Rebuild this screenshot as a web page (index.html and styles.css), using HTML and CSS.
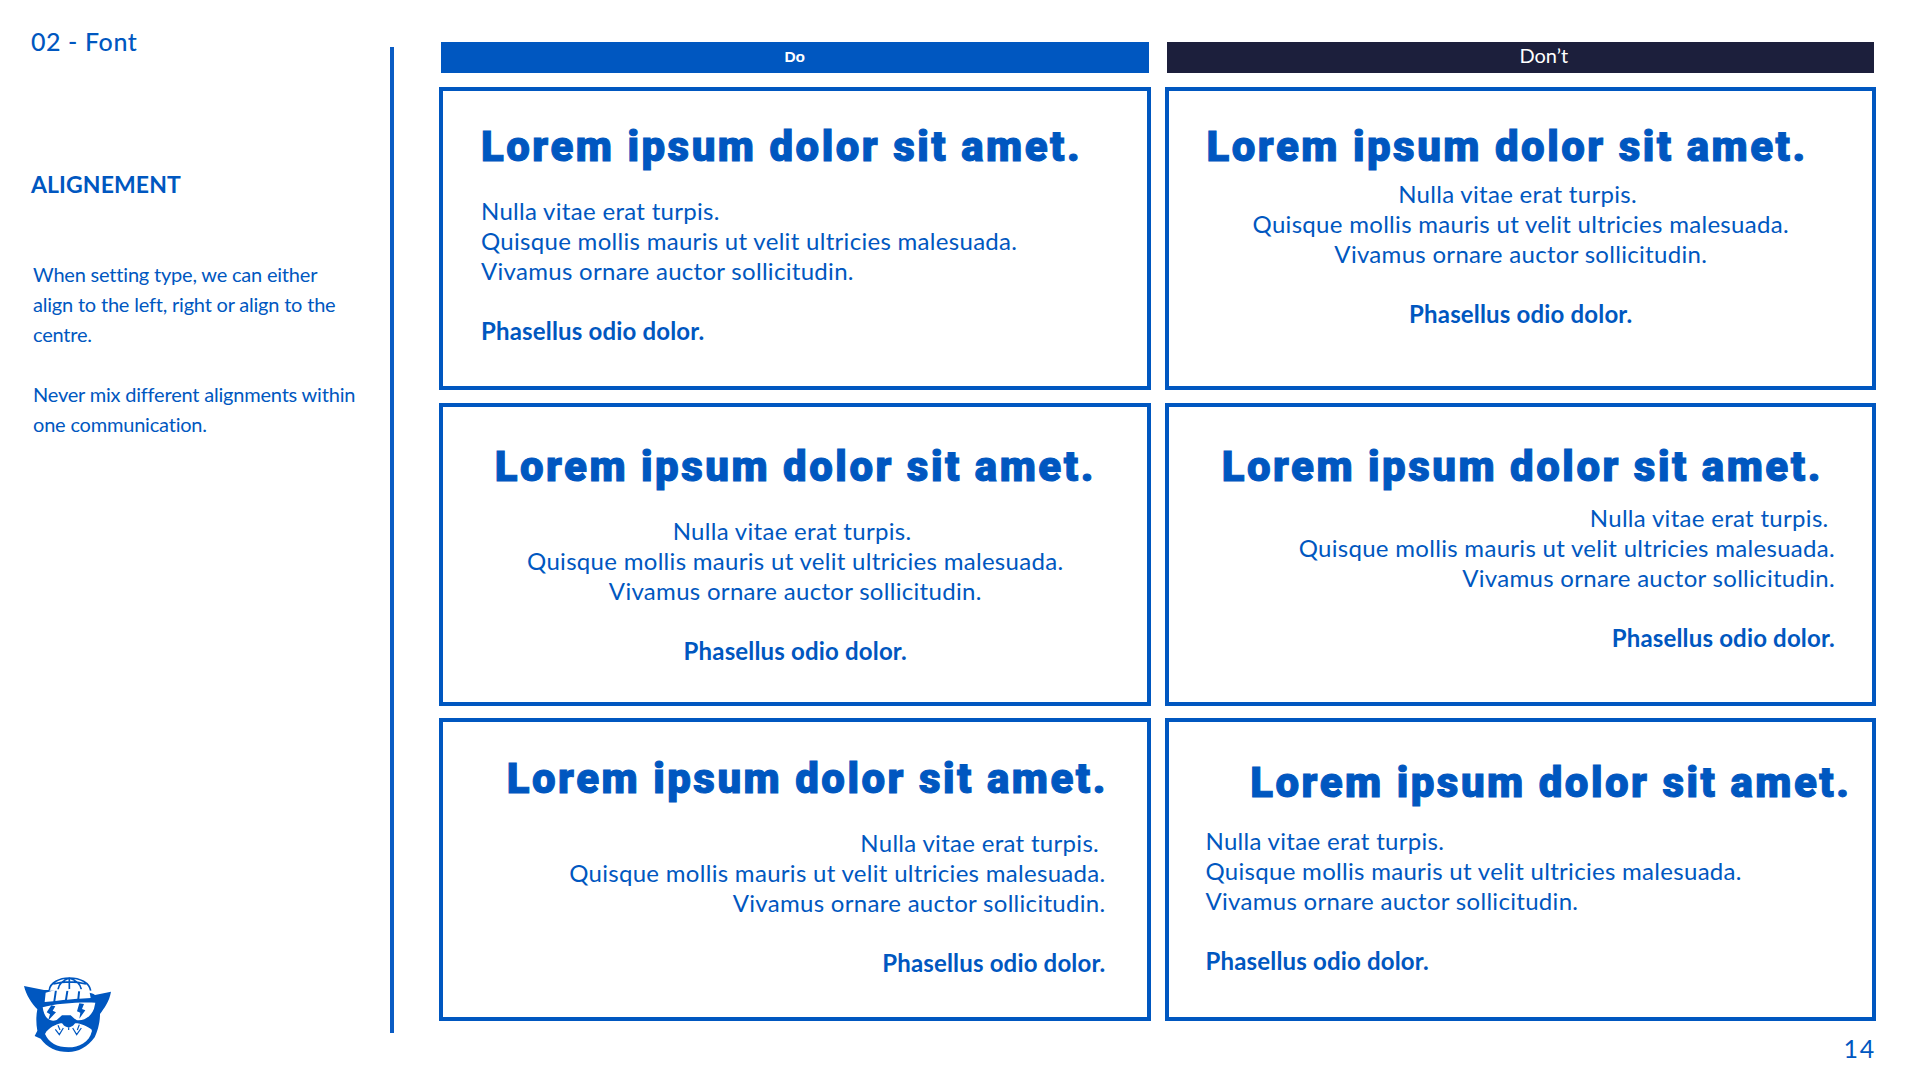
FILE: index.html
```html
<!DOCTYPE html>
<html lang="en">
<head>
<meta charset="utf-8">
<title>02 - Font</title>
<link rel="stylesheet" href="styles.css">
</head>
<body>
<div class="slide">
  <aside class="side">
    <div class="crumb">02 - Font</div>
    <h2 class="side-title">ALIGNEMENT</h2>
    <p class="side-text">When setting type, we can either<br>align to the left, right or align to the<br>centre.</p>
    <p class="side-text">Never mix different alignments within<br>one communication.</p>
    <svg class="logo" viewBox="0 0 420 420" width="140" height="140" aria-label="Logo">
      <path class="b" d="M72 138 L132 150 C150 150 270 150 285 165 L333 155 C328 185 312 205 300 222 C300 250 292 275 284 292 C262 322 235 336 205 336 C170 336 140 322 122 296 L104 288 L112 272 C108 250 108 228 112 208 C95 190 78 165 72 138 Z"/>
      <path class="w" d="M148 150 C150 128 178 114 208 114 C240 114 268 128 272 152 L150 152 Z"/>
      <path class="l" d="M148 150 C150 128 178 114 208 114 C240 114 268 128 272 152 M208 114 L208 148 M208 114 C185 122 176 135 174 148 M208 114 C232 122 242 135 244 148 M160 132 C190 124 228 124 258 132"/>
      <path class="w" d="M137 158 L165 150 L160 184 L134 186 Z M171 149 L200 147 L195 179 L166 183 Z M206 147 L235 147 L232 176 L201 179 Z M241 148 L268 153 L272 174 L238 176 Z"/>
      <path class="w" d="M128 202 C165 190 240 186 286 188 L282 206 C272 232 250 244 228 240 L212 226 L186 226 L170 240 C148 248 132 232 128 202 Z"/>
      <path class="b" d="M154 196 L166 199 L158 212 L168 217 L144 242 L150 223 L140 217 Z M238 190 L252 192 L246 207 L256 211 L238 236 L241 218 L231 214 Z"/>
      <path class="w" d="M135 282 C145 262 168 254 182 250 L232 250 C250 254 270 262 276 272 C268 308 236 322 205 322 C172 322 146 308 135 282 Z"/>
      <path class="b" d="M182 240 C194 234 218 234 230 240 C226 254 214 262 206 262 C196 262 186 254 182 240 Z"/>
      <path class="l2" d="M206 262 L206 270 M166 268 L178 284 L190 264 M218 264 L230 284 L244 264 M174 256 L180 270 M238 254 L232 270"/>
    </svg>
  </aside>
  <div class="rule"></div>
  <main class="main">
    <div class="heads">
      <div class="bar bar-do">Do</div>
      <div class="bar bar-dont"><span class="dont-label">Don’t</span></div>
    </div>
    <div class="cards">
      <section class="card left r1a">
        <h3>Lorem ipsum dolor sit amet.</h3>
        <p class="copy gap-lg">Nulla vitae erat turpis.<br>Quisque mollis mauris ut velit ultricies malesuada.<br>Vivamus ornare auctor sollicitudin.</p>
        <p class="strong">Phasellus odio dolor.</p>
      </section>
      <section class="card center r1b">
        <h3 class="title-left">Lorem ipsum dolor sit amet.</h3>
        <p class="copy gap-sm">Nulla vitae erat turpis.&nbsp;<br>Quisque mollis mauris ut velit ultricies malesuada.<br>Vivamus ornare auctor sollicitudin.</p>
        <p class="strong">Phasellus odio dolor.</p>
      </section>
      <section class="card center r2a">
        <h3>Lorem ipsum dolor sit amet.</h3>
        <p class="copy gap-xl">Nulla vitae erat turpis.&nbsp;<br>Quisque mollis mauris ut velit ultricies malesuada.<br>Vivamus ornare auctor sollicitudin.</p>
        <p class="strong">Phasellus odio dolor.</p>
      </section>
      <section class="card right r2b">
        <h3 class="title-center">Lorem ipsum dolor sit amet.</h3>
        <p class="copy gap-md">Nulla vitae erat turpis.&nbsp;<br>Quisque mollis mauris ut velit ultricies malesuada.<br>Vivamus ornare auctor sollicitudin.</p>
        <p class="strong">Phasellus odio dolor.</p>
      </section>
      <section class="card right r3a">
        <h3>Lorem ipsum dolor sit amet.</h3>
        <p class="copy gap-lg">Nulla vitae erat turpis.&nbsp;<br>Quisque mollis mauris ut velit ultricies malesuada.<br>Vivamus ornare auctor sollicitudin.</p>
        <p class="strong">Phasellus odio dolor.</p>
      </section>
      <section class="card left r3b">
        <h3 class="title-out">Lorem ipsum dolor sit amet.</h3>
        <p class="copy gap-md2">Nulla vitae erat turpis.<br>Quisque mollis mauris ut velit ultricies malesuada.<br>Vivamus ornare auctor sollicitudin.</p>
        <p class="strong">Phasellus odio dolor.</p>
      </section>
    </div>
    <div class="page">14</div>
  </main>
</div>
</body>
</html>
```
FILE: styles.css
```css
* { box-sizing: border-box; }
html, body { margin: 0; padding: 0; background: #fff; }
body { font-family: "Lato", "Noto Sans", sans-serif; color: #0057c0; }
.slide { width: 1920px; height: 1080px; display: flex; overflow: hidden; }

.side { width: 390px; padding: 25px 0 0 31px; display: flex; flex-direction: column; }
.crumb { font-size: 25px; line-height: 32px; font-weight: 500; letter-spacing: 0.6px; }
.side-title { margin: 112px 0 0; font-size: 23px; line-height: 30px; font-weight: 700; letter-spacing: 0.1px; }
.side-text { margin: 0 0 30px 2px; font-size: 20px; line-height: 30px; letter-spacing: -0.2px; }
.side-title + .side-text { margin-top: 60px; }
.logo { margin: auto 0 0 -31px; display: block; flex: none; }
.b { fill: #0057c0; }
.w { fill: #fff; }
.l { fill: none; stroke: #0057c0; stroke-width: 5; }
.l2 { fill: none; stroke: #0057c0; stroke-width: 3.5; }

.rule { width: 4px; margin: 47px 0 47px; background: #0a5cc4; flex: none; }

.main { margin-left: 45px; width: 1437px; padding-top: 42px; display: flex; flex-direction: column; }
.heads { display: grid; grid-template-columns: 711.5px 711.5px; column-gap: 14px; margin-bottom: 14px; }
.bar { height: 31px; margin: 0 2px; display: flex; align-items: center; justify-content: center; color: #fff; }
.bar-do { background: #0057c0; font: 700 15.5px/1 "Liberation Sans", sans-serif; padding-bottom: 2px; }
.bar-dont { background: #1c1f3c; font-size: 20px; font-weight: 400; padding-left: 47px; padding-bottom: 6px; }

.cards { display: grid; grid-template-columns: 711.5px 711.5px; grid-auto-rows: 303px; gap: 12.5px 14px; }
.card { border: 4px solid #0057c0; padding: 0 37px 0 38px; overflow: hidden; }
.card h3 { margin: 0; font-family: "Roboto", "Lato", sans-serif; font-size: 42px; line-height: 50px; font-weight: 900; letter-spacing: 2.5px; -webkit-text-stroke: 1px #0057c0; white-space: nowrap; }
.copy { margin: 0; font-size: 24px; line-height: 30px; letter-spacing: 0.3px; }
.strong { margin: 30px 0 0; font-size: 24px; line-height: 30px; font-weight: 700; letter-spacing: 0.17px; }
.left { text-align: left; }
.center { text-align: center; }
.right { text-align: right; }

.r1a, .r1b { padding-top: 31px; }
.r2a, .r2b { padding-top: 35px; }
.r3a { padding-top: 32px; padding-right: 41px; }
.r3a h3 { margin-right: -2.5px; }
.r3b { padding-top: 36px; padding-left: 37px; }
.r1b h3.title-left { text-align: left; }
.r2b h3.title-center { text-align: center; margin-right: -3px; }
.r3b h3.title-out { text-align: right; margin-right: -16.5px; }
.gap-lg { margin-top: 24px; }
.gap-sm { margin-top: 7px; }
.gap-xl { margin-top: 24px; }
.gap-md { margin-top: 11px; }
.gap-md2 { margin-top: 18px; }

.page { margin-top: 12px; text-align: right; font-size: 25px; line-height: 30px; letter-spacing: 1.8px; padding-right: 0; }
```
